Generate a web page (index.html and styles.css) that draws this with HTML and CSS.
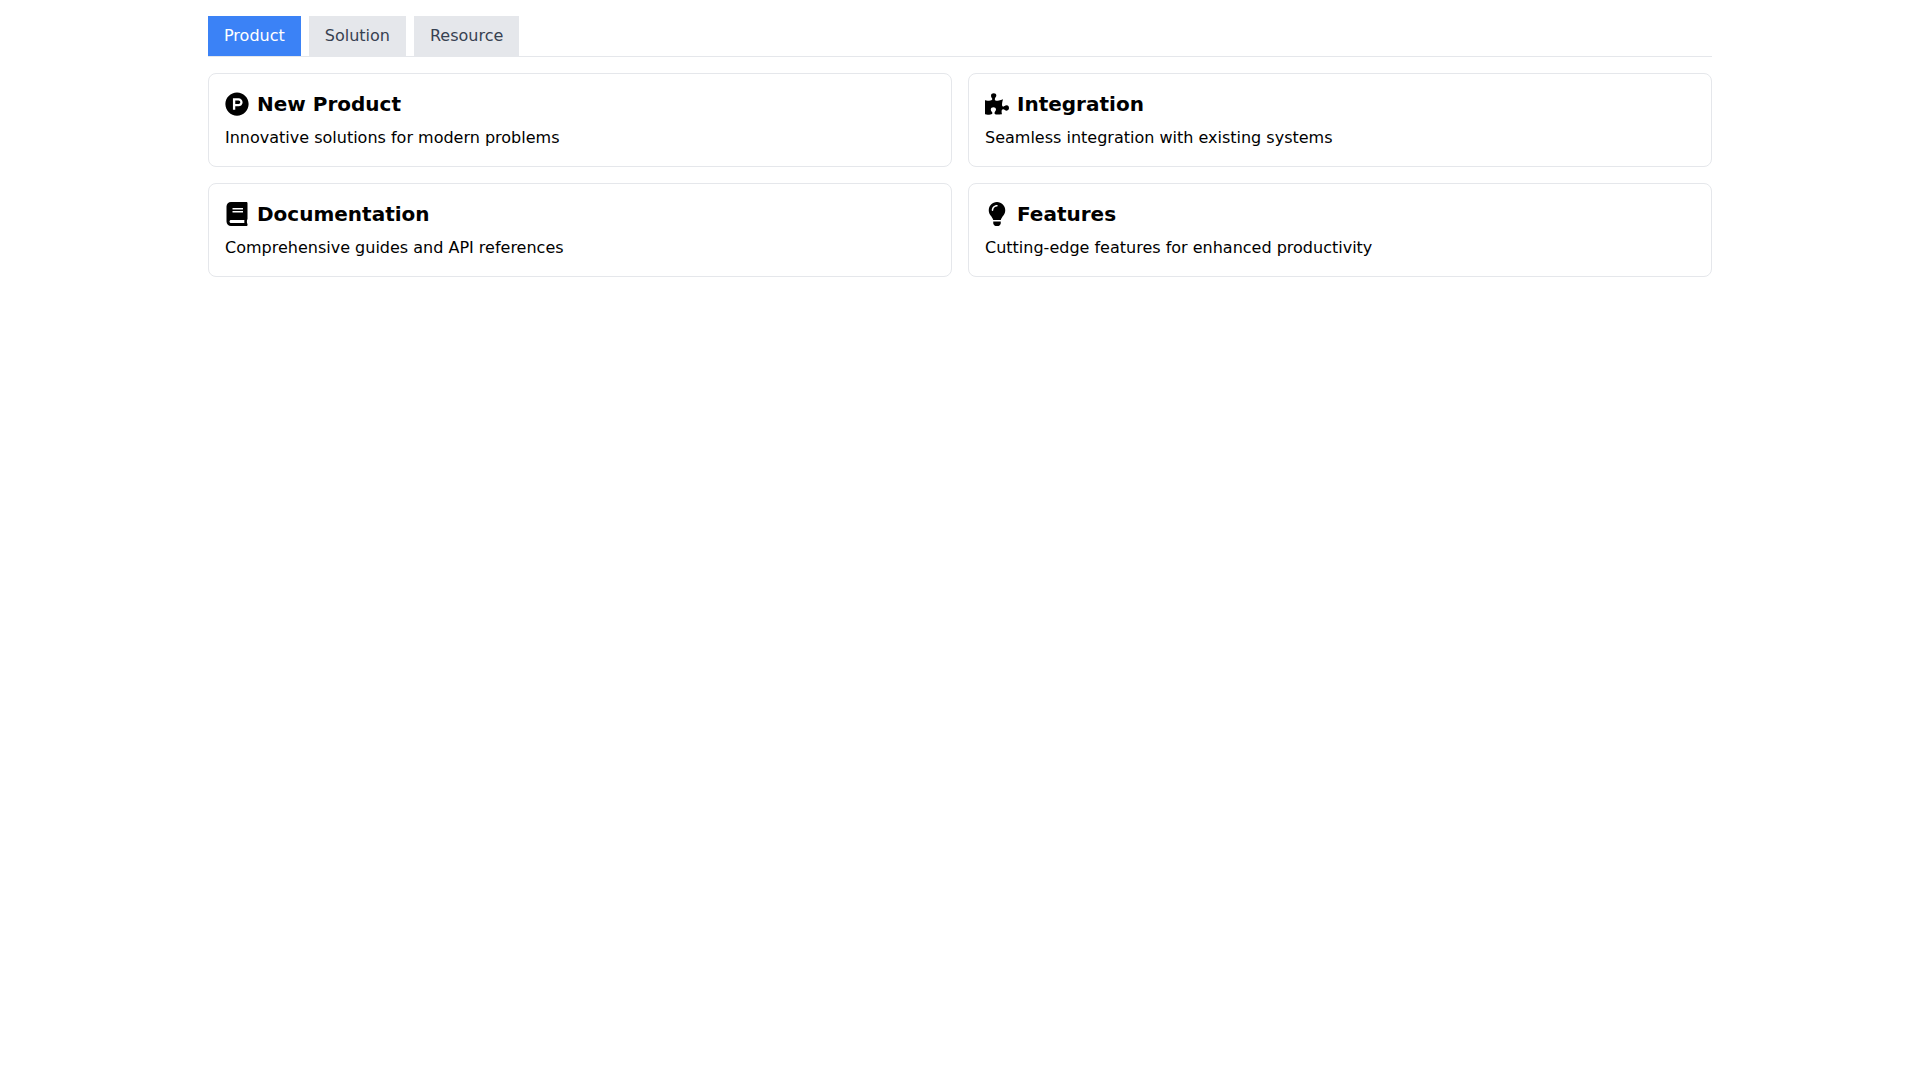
FILE: index.html
```html
<!DOCTYPE html>
<html lang="en">
<head>
<meta charset="utf-8">
<title>Product</title>
<link rel="stylesheet" href="styles.css">
</head>
<body>
<main class="container">
  <nav class="tabs">
    <button class="tab tab-active">Product</button>
    <button class="tab">Solution</button>
    <button class="tab">Resource</button>
  </nav>
  <section class="grid">
    <article class="card">
      <h2 class="card-title">
        <svg class="icon" viewBox="0 0 512 512"><path d="M326.3 218.8c0 20.5-16.7 37.2-37.2 37.2h-70.300v-74.400h70.300c20.500 0 37.200 16.700 37.200 37.200zM504 256c0 137-111 248-248 248S8 393 8 256 119 8 256 8s248 111 248 248zm-128.700-37.200c0-47.900-38.900-86.800-86.800-86.800H169.200v248h49.600v-74.400h70.300c47.900 0 86.800-38.900 86.800-86.800z"/></svg>
        New Product
      </h2>
      <p class="card-text">Innovative solutions for modern problems</p>
    </article>
    <article class="card">
      <h2 class="card-title">
        <svg class="icon" viewBox="0 0 576 512"><path d="M519.442 288.651c-41.519 0-59.5 31.593-82.058 31.593C377.409 320.244 432 144 432 144s-196.288 80-196.288-3.297c0-35.827 36.288-46.25 36.288-85.985C272 19.216 243.885 0 210.539 0c-34.654 0-66.366 18.891-66.366 56.346 0 41.364 31.711 59.277 31.711 81.75C175.885 207.719 0 166.758 0 166.758v333.237s178.635 41.047 178.635-28.662c0-22.473-40-40.107-40-81.471 0-37.456 29.25-56.346 63.577-56.346 33.673 0 61.788 19.216 61.788 54.717 0 39.735-36.288 50.158-36.288 85.985 0 60.803 129.675 25.73 181.23 25.73 0 0-34.725-120.101 25.827-120.101 35.962 0 46.423 36.152 86.308 36.152C556.712 416 576 387.99 576 354.443c0-34.199-18.962-65.792-56.558-65.792z"/></svg>
        Integration
      </h2>
      <p class="card-text">Seamless integration with existing systems</p>
    </article>
    <article class="card">
      <h2 class="card-title">
        <svg class="icon" viewBox="0 0 448 512"><path d="M448 360V24c0-13.300-10.700-24-24-24H96C43 0 0 43 0 96v320c0 53 43 96 96 96h328c13.300 0 24-10.700 24-24v-16c0-7.500-3.500-14.300-8.900-18.700-4.200-15.400-4.200-59.300 0-74.700 5.400-4.300 8.900-11.100 8.900-18.600zM128 134c0-3.300 2.700-6 6-6h212c3.300 0 6 2.700 6 6v20c0 3.300-2.700 6-6 6H134c-3.300 0-6-2.700-6-6v-20zm0 64c0-3.300 2.700-6 6-6h212c3.300 0 6 2.700 6 6v20c0 3.300-2.700 6-6 6H134c-3.300 0-6-2.700-6-6v-20zm253.400 250H96c-17.700 0-32-14.300-32-32 0-17.600 14.400-32 32-32h285.400c-1.900 17.100-1.900 46.900 0 64z"/></svg>
        Documentation
      </h2>
      <p class="card-text">Comprehensive guides and API references</p>
    </article>
    <article class="card">
      <h2 class="card-title">
        <svg class="icon" viewBox="0 0 352 512"><path d="M96.060 454.350c.01 6.290 1.870 12.450 5.360 17.690l17.090 25.690a31.990 31.990 0 0 0 26.630 14.270h61.710a31.990 31.990 0 0 0 26.630-14.270l17.090-25.690a31.989 31.989 0 0 0 5.360-17.690l.04-38.350H96.010l.05 38.350zM0 176c0 44.370 16.450 84.850 43.560 115.780 16.520 18.850 42.360 58.230 52.210 91.450.04.260.07.520.11.780h160.240c.04-.260.07-.510.11-.780 9.850-33.220 35.690-72.600 52.210-91.450C335.550 260.850 352 220.370 352 176 352 78.610 272.900-.300 175.450 0 73.440.310 0 82.970 0 176zm176-80c-44.110 0-80 35.890-80 80 0 8.840-7.160 16-16 16s-16-7.160-16-16c0-61.760 50.240-112 112-112 8.840 0 16 7.160 16 16s-7.160 16-16 16z"/></svg>
        Features
      </h2>
      <p class="card-text">Cutting-edge features for enhanced productivity</p>
    </article>
  </section>
</main>
</body>
</html>
```
FILE: styles.css
```css
* {
  box-sizing: border-box;
}

body {
  margin: 0;
  background: #ffffff;
  color: #000000;
  font-family: "DejaVu Sans", sans-serif;
  font-size: 16px;
  line-height: 24px;
}

.container {
  max-width: 1536px;
  margin: 0 auto;
  padding: 16px;
}

.tabs {
  display: flex;
  gap: 8px;
  border-bottom: 1px solid #e5e7eb;
}

.tab {
  border: 0;
  margin: 0;
  padding: 8px 16px;
  background: #e5e7eb;
  color: #374151;
  font: inherit;
}

.tab-active {
  background: #3b82f6;
  color: #ffffff;
}

.grid {
  display: grid;
  grid-template-columns: 1fr 1fr;
  gap: 16px;
  margin-top: 16px;
}

.card {
  padding: 16px;
  background: #ffffff;
  border: 1px solid #e5e7eb;
  border-radius: 8px;
}

.card-title {
  display: flex;
  align-items: center;
  gap: 8px;
  margin: 0 0 8px;
  font-size: 20px;
  line-height: 28px;
  font-weight: 700;
}

.icon {
  width: 24px;
  height: 24px;
  flex: none;
  fill: currentColor;
}

.card-text {
  margin: 0;
}
```
